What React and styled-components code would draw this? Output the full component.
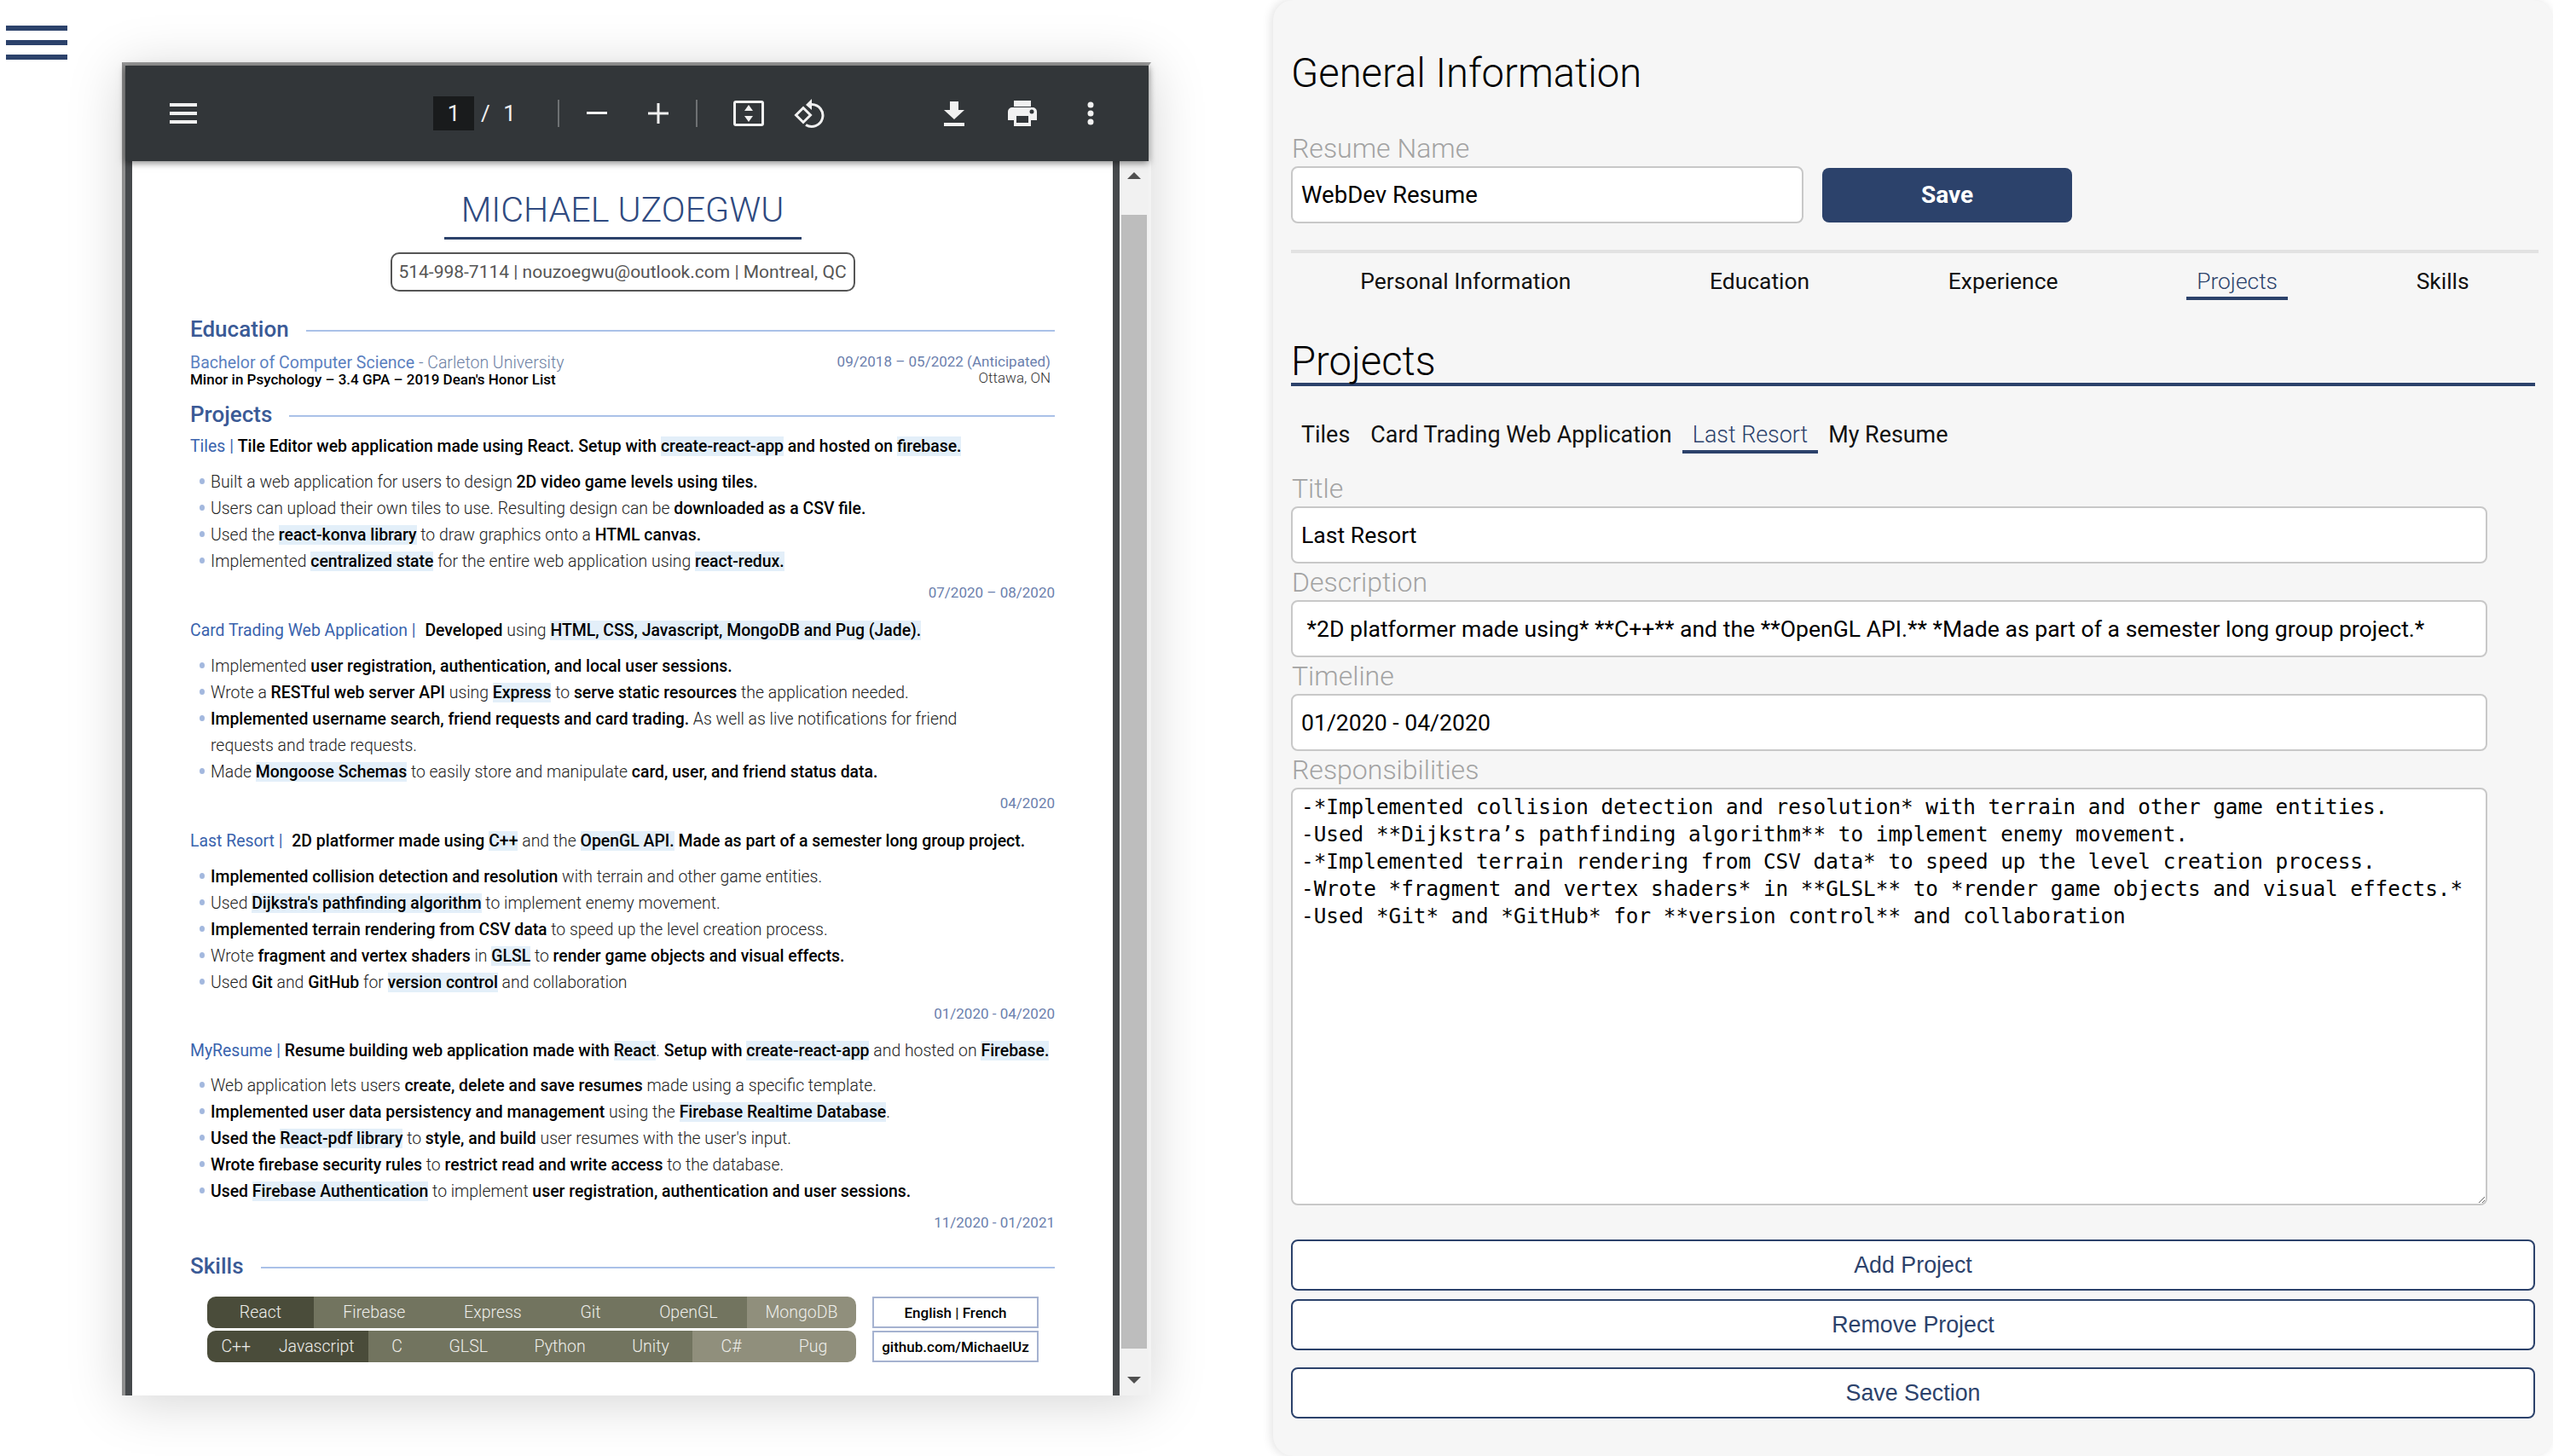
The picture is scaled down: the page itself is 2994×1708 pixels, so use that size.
import React from "react";
import styled, { createGlobalStyle } from "styled-components";

const NAVY = "#2c426b";

const GlobalStyle = createGlobalStyle`
  html, body {
    margin: 0;
    padding: 0;
    background: #fff;
    font-family: Roboto, "Liberation Sans", sans-serif;
  }
  * {
    box-sizing: border-box;
  }
`;

const Page = styled.div`
  width: 2994px;
  height: 1708px;
  display: flex;
  overflow: hidden;
  background: #fff;
`;

const MenuButton = styled.div`
  width: 72px;
  margin: 30px 0 0 7px;
  display: flex;
  flex-direction: column;
  gap: 11px;
  flex-shrink: 0;
`;

const MenuBar = styled.span`
  height: 6px;
  background: ${NAVY};
`;

const Viewer = styled.div`
  width: 1207px;
  height: 1564px;
  margin: 73px 0 0 64px;
  flex-shrink: 0;
  display: flex;
  flex-direction: column;
  border-top: 4px solid #999;
  border-left: 4px solid #8f8f8f;
  border-right: 3px solid #f3f3f3;
  background: #fff;
  box-shadow: 0 8px 60px rgba(0, 0, 0, 0.17);
`;

const Toolbar = styled.div`
  height: 112px;
  background: #323639;
  flex-shrink: 0;
  display: flex;
  align-items: center;
  color: #f1f1f1;
  position: relative;
  z-index: 1;
  box-shadow: 0 2px 8px rgba(0, 0, 0, 0.5);
`;

const ToolIcon = styled.svg`
  display: block;
  flex-shrink: 0;
  margin-left: ${(p) => p.$left}px;
`;

const PageBox = styled.span`
  width: 48px;
  height: 40px;
  margin-left: 277px;
  background: #191b1c;
  display: flex;
  align-items: center;
  justify-content: center;
  font-size: 26px;
`;

const PageTotal = styled.span`
  margin-left: 8px;
  width: 51px;
  font-size: 26px;
  word-spacing: 9px;
  white-space: nowrap;
`;

const ToolDivider = styled.span`
  width: 2px;
  height: 32px;
  background: #6e7173;
  margin-left: ${(p) => p.$left}px;
`;

const ViewerBody = styled.div`
  flex: 1;
  display: flex;
  min-height: 0;
`;

const Sheet = styled.div`
  flex: 1;
  border-left: 8px solid #46494c;
  border-right: 8px solid #46494c;
  background: #fff;
  padding: 0 68px;
  overflow: hidden;
`;

const ScrollTrack = styled.div`
  width: 34px;
  background: #f1f1f1;
  flex-shrink: 0;
  display: flex;
  flex-direction: column;
  align-items: center;
`;

const ScrollArrow = styled.span`
  width: 0;
  height: 0;
  border-left: 8px solid transparent;
  border-right: 8px solid transparent;
  ${(p) => (p.$down ? "border-top: 8px solid #505050;" : "border-bottom: 8px solid #505050;")}
  margin-top: ${(p) => p.$top}px;
`;

const ScrollThumb = styled.span`
  width: 30px;
  height: 1330px;
  background: #bdbdbd;
  margin-top: 42px;
`;

const NameBlock = styled.div`
  display: flex;
  flex-direction: column;
  align-items: center;
  padding-top: 36px;
`;

const Name = styled.h1`
  margin: 0;
  width: 419px;
  height: 56px;
  border-bottom: 3px solid ${NAVY};
  text-align: center;
  font-size: 41.2px;
  font-weight: 300;
  line-height: 42px;
  color: #2f4a80;
  white-space: nowrap;
`;

const Contact = styled.div`
  width: 545px;
  height: 46px;
  margin-top: 15px;
  border: 2px solid #555;
  border-radius: 10px;
  display: flex;
  align-items: center;
  justify-content: center;
  font-size: 21px;
  color: #555;
  white-space: nowrap;
`;

const SectionHead = styled.div`
  display: flex;
  align-items: center;
  gap: 20px;
  height: 24px;
  margin-top: ${(p) => p.$top}px;
`;

const SectionTitle = styled.h2`
  margin: 0;
  font-size: 26px;
  font-weight: 500;
  color: #3a5a96;
  line-height: 24px;
`;

const SectionRule = styled.span`
  flex: 1;
  height: 2px;
  margin-top: 4px;
  background: #aac1e8;
`;

const EduRow = styled.div`
  display: flex;
  justify-content: space-between;
  padding-right: 5px;
  margin-top: 17px;
`;

const EduDegree = styled.div`
  font-size: 19.5px;
  line-height: 21px;
  color: #5b7fc0;
`;

const EduSchool = styled.span`
  font-weight: 300;
  color: #6d7fa3;
`;

const EduMinor = styled.div`
  font-size: 17px;
  line-height: 19px;
  font-weight: 500;
  color: #000;
`;

const EduRight = styled.div`
  text-align: right;
`;

const EduDate = styled.div`
  font-size: 17px;
  line-height: 19px;
  color: #6b80ad;
`;

const EduPlace = styled.div`
  font-size: 17px;
  line-height: 19px;
  font-weight: 300;
  color: #333;
`;

const ProjectLine = styled.div`
  font-size: 19.42px;
  font-weight: 500;
  line-height: 23px;
  height: 23px;
  white-space: nowrap;
  margin-top: ${(p) => p.$top}px;
  color: #000;
`;

const ProjectName = styled.span`
  font-weight: 400;
  color: #3a63ad;
  margin-right: ${(p) => p.$gap || 0}px;
`;

const LightText = styled.span`
  font-weight: 300;
  color: #222;
`;

const Bullets = styled.ul`
  list-style: none;
  margin: 14.5px 0 0;
  padding: 0 0 0 24px;
`;

const Bullet = styled.li`
  position: relative;
  font-size: 19.42px;
  font-weight: 300;
  line-height: 31px;
  color: #222;
  white-space: nowrap;
  &::before {
    content: "";
    position: absolute;
    left: -13px;
    top: 11px;
    width: 6px;
    height: 7px;
    border-radius: 50%;
    background: ${(p) => (p.$plain ? "transparent" : "#a3b8de")};
  }
`;

const Strong = styled.b`
  font-weight: 500;
  color: #000;
`;

const Mark = styled.span`
  background: #e3eff9;
  font-weight: 500;
  color: #000;
`;

const DateLine = styled.div`
  text-align: right;
  font-size: 17px;
  line-height: 20px;
  color: #6b80ad;
  margin-top: 11px;
`;

const SkillsRow = styled.div`
  display: flex;
  margin: 24px 0 0 20px;
  gap: 19px;
`;

const SkillRows = styled.div`
  width: 761px;
  display: flex;
  flex-direction: column;
  gap: 3px;
`;

const SkillRow = styled.div`
  height: 37px;
  display: flex;
  border-radius: 10px;
  overflow: hidden;
`;

const SkillGroup = styled.div`
  width: ${(p) => p.$width}px;
  display: flex;
  align-items: center;
  justify-content: space-around;
  background: ${(p) => p.$bg};
  font-size: 19.5px;
  font-weight: 300;
  color: #eeeeea;
`;

const LinkBoxes = styled.div`
  display: flex;
  flex-direction: column;
  gap: 3px;
`;

const LinkBox = styled.div`
  width: 195px;
  height: 37px;
  border: 2px solid #a5b2d0;
  display: flex;
  align-items: center;
  justify-content: center;
  font-size: 17px;
  font-weight: 500;
  color: #000;
  white-space: nowrap;
`;

const Panel = styled.div`
  width: 1501px;
  height: 1708px;
  margin-left: 143px;
  flex-shrink: 0;
  background: #f6f6f6;
  border-radius: 24px;
  box-shadow: -2px 0 12px rgba(0, 0, 0, 0.12);
  padding: 52px 21px 0;
`;

const BigTitle = styled.h2`
  margin: 0;
  font-size: 47.2px;
  font-weight: 300;
  line-height: 68px;
  color: #000;
`;

const NameRow = styled.div`
  display: flex;
  align-items: center;
  gap: 22px;
`;

const FieldLabel = styled.div`
  font-size: 32px;
  font-weight: 300;
  color: #a3a3a3;
  line-height: 36px;
  padding-left: 1px;
  margin: ${(p) => p.$top}px 0 3px;
`;

const TextInput = styled.input`
  display: block;
  width: ${(p) => p.$width}px;
  height: 67px;
  border: 2px solid #c8c8c8;
  border-radius: 8px;
  background: #fff;
  padding: 0 10px;
  font-family: Roboto, sans-serif;
  font-size: ${(p) => p.$size || 26.6}px;
  color: #000;
  margin: 0;
  outline: none;
`;

const SaveButton = styled.button`
  width: 293px;
  height: 64px;
  background: ${NAVY};
  color: #fff;
  border: none;
  border-radius: 8px;
  font-family: Roboto, sans-serif;
  font-size: 28px;
  font-weight: 700;
`;

const Tabs = styled.div`
  margin-top: 31px;
  width: 1463px;
  height: 64px;
  border-top: 4px solid #e2e2e2;
  display: flex;
  justify-content: space-around;
`;

const Tab = styled.div`
  padding: 14px 12px 0;
  height: 55px;
  display: flex;
  align-items: center;
  font-size: 26.4px;
  font-weight: ${(p) => (p.$active ? 300 : 400)};
  color: ${(p) => (p.$active ? NAVY : "#111")};
  border-bottom: 4px solid ${(p) => (p.$active ? NAVY : "transparent")};
`;

const ProjectsTitle = styled(BigTitle)`
  margin-top: 44px;
  width: 1459px;
  line-height: 46px;
  height: 52px;
  border-bottom: 4px solid ${NAVY};
`;

const SubTabs = styled.div`
  display: flex;
  margin-top: 39px;
`;

const SubTab = styled(Tab)`
  height: 40px;
  padding-top: 0;
  font-size: 26.9px;
`;

const Resp = styled.textarea`
  display: block;
  width: 1403px;
  height: 490px;
  border: 2px solid #c8c8c8;
  border-radius: 8px;
  background: #fff;
  padding: 5px 10px;
  font-family: "DejaVu Sans Mono", monospace;
  font-size: 24.33px;
  line-height: 32px;
  color: #000;
  margin: 0;
  outline: none;
  white-space: pre;
`;

const OutlineButton = styled.button`
  display: block;
  width: 1459px;
  height: 60px;
  margin-top: ${(p) => p.$top}px;
  background: #fff;
  border: 2px solid ${NAVY};
  border-radius: 8px;
  color: ${NAVY};
  font-family: "Liberation Sans", Arial, sans-serif;
  font-size: 26.8px;
`;

const respText = `-*Implemented collision detection and resolution* with terrain and other game entities.
-Used **Dijkstra’s pathfinding algorithm** to implement enemy movement.
-*Implemented terrain rendering from CSV data* to speed up the level creation process.
-Wrote *fragment and vertex shaders* in **GLSL** to *render game objects and visual effects.*
-Used *Git* and *GitHub* for **version control** and collaboration`;

const skillRows = [
  [
    { bg: "#4a4c3a", width: 125, items: ["React"] },
    { bg: "#72745f", width: 508, items: ["Firebase", "Express", "Git", "OpenGL"] },
    { bg: "#908f7c", width: 128, items: ["MongoDB"] },
  ],
  [
    { bg: "#4a4c3a", width: 189, items: ["C++", "Javascript"] },
    { bg: "#72745f", width: 380, items: ["C", "GLSL", "Python", "Unity"] },
    { bg: "#908f7c", width: 192, items: ["C#", "Pug"] },
  ],
];

const Icon = ({ left, w, h, children }) => (
  <ToolIcon $left={left} width={w} height={h} viewBox={`0 0 ${w} ${h}`} fill="#f1f1f1">
    {children}
  </ToolIcon>
);

const ViewerToolbar = () => (
  <Toolbar>
    <Icon left={52} w={32} h={24}>
      <path d="M0 0h32v4H0zM0 10h32v4H0zM0 20h32v4H0z" />
    </Icon>
    <PageBox>1</PageBox>
    <PageTotal>/ 1</PageTotal>
    <ToolDivider $left={39} />
    <Icon left={32} w={24} h={4}>
      <path d="M0 0h24v3H0z" />
    </Icon>
    <Icon left={48} w={24} h={24}>
      <path d="M10.500 0h3v10.500H24v3H13.500V24h-3V13.500H0v-3h10.500z" />
    </Icon>
    <ToolDivider $left={32} />
    <Icon left={42} w={36} h={30}>
      <path d="M3 0h30a3 3 0 0 1 3 3v24a3 3 0 0 1-3 3H3a3 3 0 0 1-3-3V3a3 3 0 0 1 3-3zm0 3v24h30V3H3z" />
      <path d="M18 5l5 7H13zM18 25l-5-7h10z" />
    </Icon>
    <Icon left={35} w={36} h={36}>
      <path d="M11 11.500L19.500 20 11 28.500 2.500 20z" fill="none" stroke="#f1f1f1" strokeWidth="3" />
      <path d="M14 8l7-7v13z" />
      <path d="M21 7.500A13 13 0 1 1 14 31.500" fill="none" stroke="#f1f1f1" strokeWidth="3" />
    </Icon>
    <Icon left={140} w={24} h={29}>
      <path d="M7 0h10v10h7L12 21 0 10h7zM0 25h24v4H0z" />
    </Icon>
    <Icon left={51} w={34} h={30}>
      <path
        fillRule="evenodd"
        d="M7 0h20v7H7zM5 8h24a5 5 0 0 1 5 5v10h-7v7H7v-7H0V13a5 5 0 0 1 5-5zM10 18v8h14v-8zM28 10.500a2.500 2.500 0 1 0 0 5 2.500 2.500 0 0 0 0-5z"
      />
    </Icon>
    <Icon left={59} w={8} h={28}>
      <circle cx="4" cy="4" r="3.500" />
      <circle cx="4" cy="14" r="3.500" />
      <circle cx="4" cy="24" r="3.500" />
    </Icon>
  </Toolbar>
);

const Resume = () => (
  <Sheet>
    <NameBlock>
      <Name>MICHAEL UZOEGWU</Name>
      <Contact>514-998-7114 | nouzoegwu@outlook.com | Montreal, QC</Contact>
    </NameBlock>

    <SectionHead $top={32}>
      <SectionTitle>Education</SectionTitle>
      <SectionRule />
    </SectionHead>
    <EduRow>
      <div>
        <EduDegree>
          Bachelor of Computer Science <EduSchool>- Carleton University</EduSchool>
        </EduDegree>
        <EduMinor>Minor in Psychology – 3.4 GPA – 2019 Dean's Honor List</EduMinor>
      </div>
      <EduRight>
        <EduDate>09/2018 – 05/2022 (Anticipated)</EduDate>
        <EduPlace>Ottawa, ON</EduPlace>
      </EduRight>
    </EduRow>

    <SectionHead $top={19}>
      <SectionTitle>Projects</SectionTitle>
      <SectionRule />
    </SectionHead>
    <ProjectLine $top={14}>
      <ProjectName>Tiles | </ProjectName>Tile Editor web application made using React. Setup with{" "}
      <Mark>create-react-app</Mark> and hosted on <Mark>firebase.</Mark>
    </ProjectLine>
    <Bullets>
      <Bullet>Built a web application for users to design <Strong>2D video game levels using tiles.</Strong></Bullet>
      <Bullet>Users can upload their own tiles to use. Resulting design can be <Strong>downloaded as a CSV file.</Strong></Bullet>
      <Bullet>Used the <Mark>react-konva library</Mark> to draw graphics onto a <Strong>HTML canvas.</Strong></Bullet>
      <Bullet>Implemented <Mark>centralized state</Mark> for the entire web application using <Mark>react-redux.</Mark></Bullet>
    </Bullets>
    <DateLine>07/2020 – 08/2020</DateLine>

    <ProjectLine $top={23.5}>
      <ProjectName $gap={6}>Card Trading Web Application | </ProjectName>Developed <LightText>using</LightText>{" "}
      <Mark>HTML, CSS, Javascript, MongoDB and Pug (Jade).</Mark>
    </ProjectLine>
    <Bullets>
      <Bullet>Implemented <Strong>user registration, authentication, and local user sessions.</Strong></Bullet>
      <Bullet>Wrote a <Strong>RESTful web server API</Strong> using <Mark>Express</Mark> to <Strong>serve static resources</Strong> the application needed.</Bullet>
      <Bullet><Strong>Implemented username search, friend requests and card trading.</Strong> As well as live notifications for friend</Bullet>
      <Bullet $plain>requests and trade requests.</Bullet>
      <Bullet>Made <Mark>Mongoose Schemas</Mark> to easily store and manipulate <Strong>card, user, and friend status data.</Strong></Bullet>
    </Bullets>
    <DateLine>04/2020</DateLine>

    <ProjectLine $top={23.5}>
      <ProjectName $gap={6}>Last Resort | </ProjectName>2D platformer made using <Mark>C++</Mark>{" "}
      <LightText>and the</LightText> <Mark>OpenGL API.</Mark> Made as part of a semester long group project.
    </ProjectLine>
    <Bullets>
      <Bullet><Strong>Implemented collision detection and resolution</Strong> with terrain and other game entities.</Bullet>
      <Bullet>Used <Mark>Dijkstra's pathfinding algorithm</Mark> to implement enemy movement.</Bullet>
      <Bullet><Strong>Implemented terrain rendering from CSV data</Strong> to speed up the level creation process.</Bullet>
      <Bullet>Wrote <Strong>fragment and vertex shaders</Strong> in <Mark>GLSL</Mark> to <Strong>render game objects and visual effects.</Strong></Bullet>
      <Bullet>Used <Strong>Git</Strong> and <Strong>GitHub</Strong> for <Mark>version control</Mark> and collaboration</Bullet>
    </Bullets>
    <DateLine>01/2020 - 04/2020</DateLine>

    <ProjectLine $top={22}>
      <ProjectName>MyResume | </ProjectName>Resume building web application made with <Mark>React</Mark>
      <LightText>.</LightText> Setup with <Mark>create-react-app</Mark> <LightText>and hosted on</LightText>{" "}
      <Mark>Firebase.</Mark>
    </ProjectLine>
    <Bullets>
      <Bullet>Web application lets users <Strong>create, delete and save resumes</Strong> made using a specific template.</Bullet>
      <Bullet><Strong>Implemented user data persistency and management</Strong> using the <Mark>Firebase Realtime Database</Mark>.</Bullet>
      <Bullet><Strong>Used the </Strong><Mark>React-pdf library</Mark> to <Strong>style, and build</Strong> user resumes with the user's input.</Bullet>
      <Bullet><Strong>Wrote firebase security rules</Strong> to <Strong>restrict read and write access</Strong> to the database.</Bullet>
      <Bullet><Strong>Used </Strong><Mark>Firebase Authentication</Mark> to implement <Strong>user registration, authentication and user sessions.</Strong></Bullet>
    </Bullets>
    <DateLine>11/2020 - 01/2021</DateLine>

    <SectionHead $top={29}>
      <SectionTitle>Skills</SectionTitle>
      <SectionRule />
    </SectionHead>
    <SkillsRow>
      <SkillRows>
        {skillRows.map((row, i) => (
          <SkillRow key={i}>
            {row.map((group) => (
              <SkillGroup key={group.bg} $bg={group.bg} $width={group.width}>
                {group.items.map((item) => (
                  <span key={item}>{item}</span>
                ))}
              </SkillGroup>
            ))}
          </SkillRow>
        ))}
      </SkillRows>
      <LinkBoxes>
        <LinkBox>English | French</LinkBox>
        <LinkBox>github.com/MichaelUz</LinkBox>
      </LinkBoxes>
    </SkillsRow>
  </Sheet>
);

const App = () => (
  <Page>
    <GlobalStyle />
    <MenuButton>
      <MenuBar />
      <MenuBar />
      <MenuBar />
    </MenuButton>
    <Viewer>
      <ViewerToolbar />
      <ViewerBody>
        <Resume />
        <ScrollTrack>
          <ScrollArrow $top={13} />
          <ScrollThumb />
          <ScrollArrow $down $top={33} />
        </ScrollTrack>
      </ViewerBody>
    </Viewer>
    <Panel>
      <BigTitle>General Information</BigTitle>
      <FieldLabel $top={36}>Resume Name</FieldLabel>
      <NameRow>
        <TextInput $width={601} $size={27.6} defaultValue="WebDev Resume" />
        <SaveButton>Save</SaveButton>
      </NameRow>
      <Tabs>
        <Tab>Personal Information</Tab>
        <Tab>Education</Tab>
        <Tab>Experience</Tab>
        <Tab $active>Projects</Tab>
        <Tab>Skills</Tab>
      </Tabs>
      <ProjectsTitle>Projects</ProjectsTitle>
      <SubTabs>
        <SubTab>Tiles</SubTab>
        <SubTab>Card Trading Web Application</SubTab>
        <SubTab $active>Last Resort</SubTab>
        <SubTab>My Resume</SubTab>
      </SubTabs>
      <FieldLabel $top={23}>Title</FieldLabel>
      <TextInput $width={1403} defaultValue="Last Resort" />
      <FieldLabel $top={4}>Description</FieldLabel>
      <TextInput $width={1403} defaultValue=" *2D platformer made using* **C++** and the **OpenGL API.** *Made as part of a semester long group project.*" />
      <FieldLabel $top={4}>Timeline</FieldLabel>
      <TextInput $width={1403} defaultValue="01/2020 - 04/2020" />
      <FieldLabel $top={4}>Responsibilities</FieldLabel>
      <Resp defaultValue={respText} />
      <OutlineButton $top={40}>Add Project</OutlineButton>
      <OutlineButton $top={10}>Remove Project</OutlineButton>
      <OutlineButton $top={20}>Save Section</OutlineButton>
    </Panel>
  </Page>
);

export default App;
